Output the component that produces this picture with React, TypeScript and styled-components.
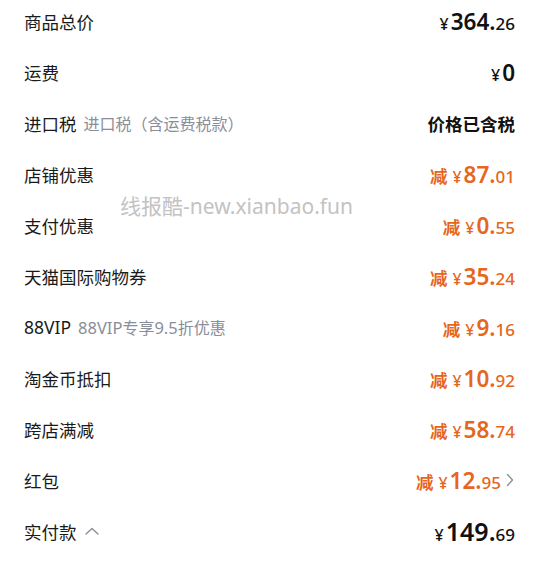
import * as React from "react"
import styled, { createGlobalStyle } from "styled-components"

const GlobalStyle = createGlobalStyle`
  html, body {
    margin: 0;
    padding: 0;
    background: #ffffff;
  }
  body {
    font-family: "Noto Sans", "Noto Sans CJK SC", sans-serif;
  }
`

const Page = styled.div`
  position: relative;
  width: 540px;
  height: 562px;
  overflow: hidden;
  background: #fff;
`

const List = styled.div`
  display: flex;
  flex-direction: column;
  gap: 7px;
  padding: 0 25px 0 24px;
`

const Row = styled.div`
  display: flex;
  align-items: center;
  justify-content: space-between;
  height: 44px;
  margin-top: -1px;
  margin-bottom: 1px;
`

const Label = styled.div`
  display: flex;
  align-items: center;
  gap: 7px;
  font-family: "Noto Sans CJK SC", "Noto Sans", sans-serif;
  font-size: 17.5px;
  color: #1a1a1a;
`

const LabelLatin = styled.span`
  font-family: "Noto Sans", "Noto Sans CJK SC", sans-serif;
  font-size: 17.5px;
`

const Hint = styled.span`
  font-family: "Noto Sans CJK SC", sans-serif;
  font-size: 16px;
  color: #8a8e99;
`

const HintLatin = styled.span`
  font-family: "Noto Sans", sans-serif;
  font-size: 16.5px;
`

const Value = styled.div<{ $tone?: "orange" | "dark" }>`
  display: flex;
  align-items: baseline;
  font-family: "Noto Sans", "Noto Sans CJK SC", sans-serif;
  font-weight: 600;
  color: ${p => (p.$tone === "orange" ? "#e5661c" : "#111")};
`

const Cut = styled.span`
  font-family: "Noto Sans CJK SC", sans-serif;
  font-size: 17.5px;
  font-weight: 700;
  margin-right: 5px;
`

const Yen = styled.span`
  font-size: 16px;
  font-weight: 500;
  margin-right: 2px;
`

const Int = styled.span<{ $big?: boolean }>`
  font-size: ${p => (p.$big ? "25px" : "22.5px")};
`

const Dec = styled.span`
  font-size: 17px;
  font-weight: 500;
`

const PlainText = styled.span`
  font-family: "Noto Sans CJK SC", sans-serif;
  font-size: 17.5px;
  font-weight: 700;
  color: #111;
`

const Watermark = styled.div`
  position: absolute;
  left: 120px;
  top: 190px;
  font-family: "Noto Sans", "Noto Sans CJK SC", sans-serif;
  font-size: 21px;
  color: #c3c3c3;
  pointer-events: none;
`

const Icon = styled.svg`
  display: block;
`

const Right = styled.div`
  display: flex;
  align-items: center;
  gap: 4px;
`

const Price = ({ v, orange, cut, big }: { v: string; orange?: boolean; cut?: boolean; big?: boolean }) => {
  const [i, d] = v.split(".")
  return (
    <Value $tone={orange ? "orange" : "dark"}>
      {cut && <Cut>减</Cut>}
      <Yen>¥</Yen>
      <Int $big={big}>{d ? i + "." : i}</Int>
      {d && <Dec>{d}</Dec>}
    </Value>
  )
}

const Chevron = () => (
  <Icon width="10" height="16" viewBox="0 0 10 16">
    <path d="M2.5 2.5 L7.5 8 L2.5 13.5" fill="none" stroke="#8a8e99" strokeWidth="1.4" strokeLinecap="round" strokeLinejoin="round" />
  </Icon>
)

const Caret = () => (
  <Icon width="16" height="10" viewBox="0 0 16 10">
    <path d="M2 8 L8 2.5 L14 8" fill="none" stroke="#8a8e99" strokeWidth="1.4" strokeLinecap="round" strokeLinejoin="round" />
  </Icon>
)

const discounts: [string, string][] = [
  ["店铺优惠", "87.01"],
  ["支付优惠", "0.55"],
  ["天猫国际购物券", "35.24"],
]

export default function App() {
  return (
    <Page>
      <GlobalStyle />
      <List>
        <Row>
          <Label>商品总价</Label>
          <Price v="364.26" />
        </Row>
        <Row>
          <Label>运费</Label>
          <Price v="0" />
        </Row>
        <Row>
          <Label>
            进口税<Hint>进口税（含运费税款）</Hint>
          </Label>
          <PlainText>价格已含税</PlainText>
        </Row>
        {discounts.map(([l, v]) => (
          <Row key={l}>
            <Label>{l}</Label>
            <Price v={v} orange cut />
          </Row>
        ))}
        <Row>
          <Label>
            <LabelLatin>88VIP</LabelLatin>
            <Hint>
              <HintLatin>88VIP</HintLatin>专享<HintLatin>9.5</HintLatin>折优惠
            </Hint>
          </Label>
          <Price v="9.16" orange cut />
        </Row>
        <Row>
          <Label>淘金币抵扣</Label>
          <Price v="10.92" orange cut />
        </Row>
        <Row>
          <Label>跨店满减</Label>
          <Price v="58.74" orange cut />
        </Row>
        <Row>
          <Label>红包</Label>
          <Right>
            <Price v="12.95" orange cut />
            <Chevron />
          </Right>
        </Row>
        <Row>
          <Label>
            实付款<Caret />
          </Label>
          <Price v="149.69" big />
        </Row>
      </List>
      <Watermark>线报酷-new.xianbao.fun</Watermark>
    </Page>
  )
}
